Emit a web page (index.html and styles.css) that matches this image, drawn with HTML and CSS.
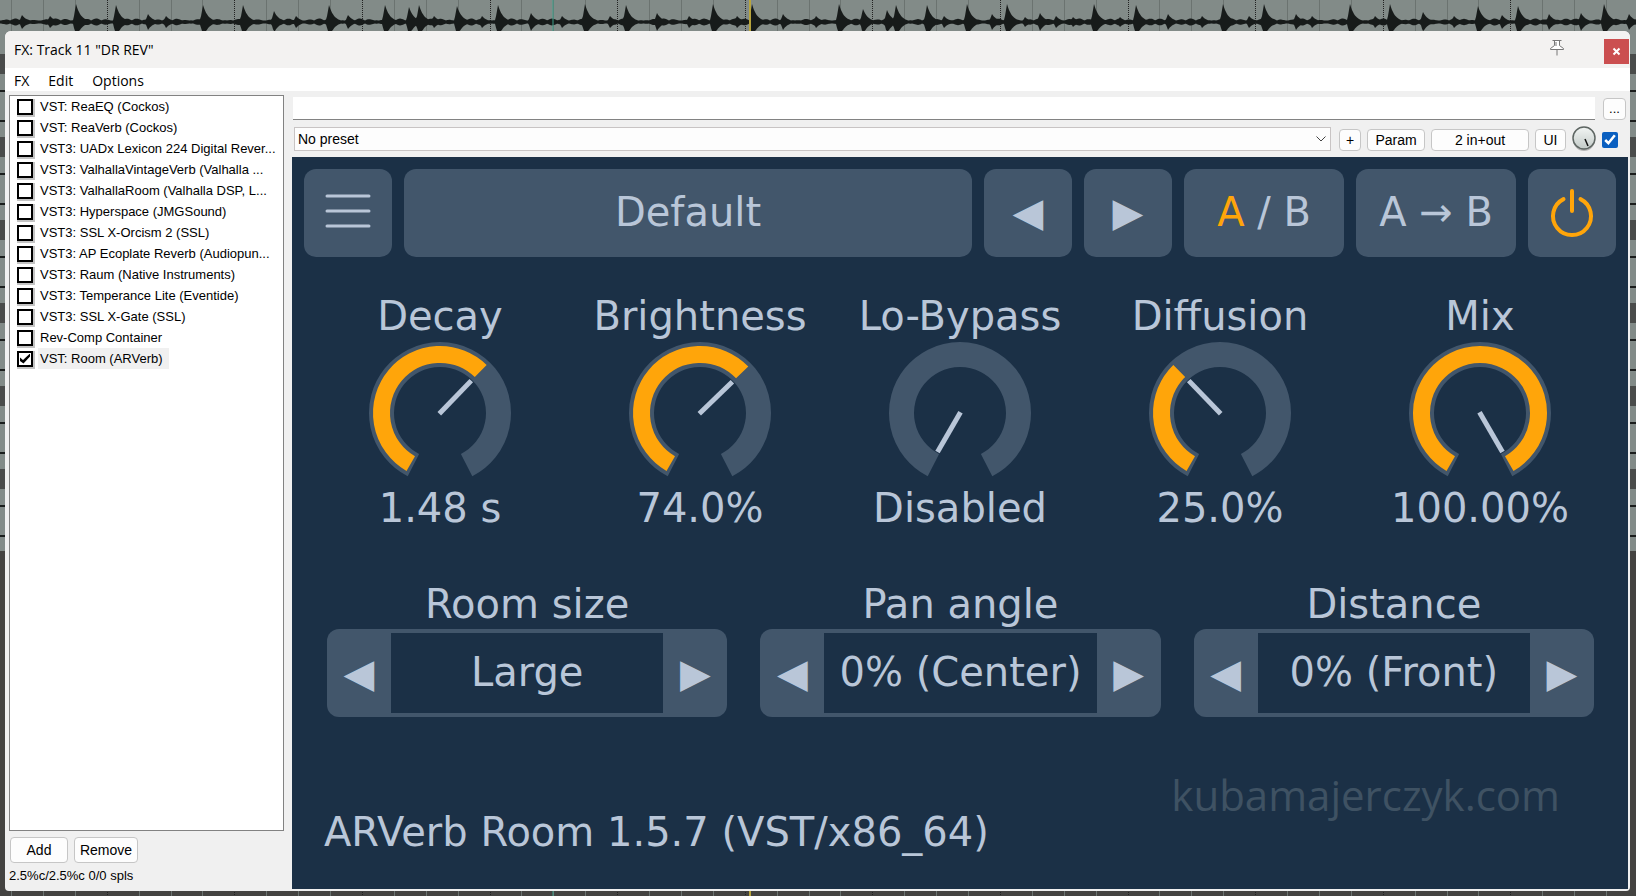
FILE: index.html
```html
<!DOCTYPE html>
<html lang="en">

<head>
    <meta charset="UTF-8">
    <meta name="viewport" content="width=device-width, initial-scale=1.0">
    <title>FX: Track 11 "DR REV"</title>
    <link rel="stylesheet" href="styles.css">
</head>

<body>
    <svg class="arrange" aria-hidden="true">
        <g id="grid"></g>
        <path id="wave" class="wave" />
        <line class="marker" x1="553" x2="553" y1="0" y2="100%" />
        <line class="playhead" x1="750" x2="750" y1="0" y2="100%" />
    </svg>

    <div class="window">
        <header class="titlebar">
            <h1 class="title">FX: Track 11 "DR REV"</h1>
            <button class="pin" aria-label="Pin window">
                <svg width="16" height="18" viewBox="0 0 16 18">
                    <path d="M3.5 1.5h9M5.500 1.500v5l-4 3v1h13v-1l-4-3v-5M8 10.5V16.5M7 3v4" />
                </svg>
            </button>
            <button class="close" aria-label="Close">
                <svg width="9" height="9" viewBox="0 0 9 9">
                    <path d="M1.5 1.5l6 6M7.5 1.5l-6 6" />
                </svg>
            </button>
        </header>

        <nav class="menu">
            <button>FX</button>
            <button>Edit</button>
            <button>Options</button>
        </nav>

        <div class="content">
            <aside class="sidebar">
                <div class="fx-list">
                    <label><input type="checkbox"><span>VST: ReaEQ (Cockos)</span></label>
                    <label><input type="checkbox"><span>VST: ReaVerb (Cockos)</span></label>
                    <label><input type="checkbox"><span>VST3: UADx Lexicon 224 Digital Rever...</span></label>
                    <label><input type="checkbox"><span>VST3: ValhallaVintageVerb (Valhalla ...</span></label>
                    <label><input type="checkbox"><span>VST3: ValhallaRoom (Valhalla DSP, L...</span></label>
                    <label><input type="checkbox"><span>VST3: Hyperspace (JMGSound)</span></label>
                    <label><input type="checkbox"><span>VST3: SSL X-Orcism 2 (SSL)</span></label>
                    <label><input type="checkbox"><span>VST3: AP Ecoplate Reverb (Audiopun...</span></label>
                    <label><input type="checkbox"><span>VST3: Raum (Native Instruments)</span></label>
                    <label><input type="checkbox"><span>VST3: Temperance Lite (Eventide)</span></label>
                    <label><input type="checkbox"><span>VST3: SSL X-Gate (SSL)</span></label>
                    <label><input type="checkbox"><span>Rev-Comp Container</span></label>
                    <label class="selected"><input type="checkbox" checked><span>VST: Room (ARVerb)</span></label>
                </div>
                <div class="list-buttons">
                    <button class="btn add">Add</button>
                    <button class="btn remove">Remove</button>
                </div>
                <div class="status">2.5%c/2.5%c 0/0 spls</div>
            </aside>

            <main class="main">
                <div class="row comment-row">
                    <input class="comment" type="text" aria-label="Comment">
                    <button class="btn dots">...</button>
                </div>
                <div class="row preset-row">
                    <div class="preset">
                        <select aria-label="Preset">
                            <option>No preset</option>
                        </select>
                        <svg class="chevron" width="10" height="6" viewBox="0 0 10 6">
                            <path d="M.5.5l4.5 4.5 4.5-4.5" />
                        </svg>
                    </div>
                    <button class="btn plus">+</button>
                    <button class="btn param">Param</button>
                    <button class="btn io">2 in+out</button>
                    <button class="btn ui">UI</button>
                    <div class="wet">
                        <svg width="24" height="26" viewBox="0 0 24 26">
                            <defs>
                                <linearGradient id="metal" x1="0" y1="0" x2="0" y2="1">
                                    <stop offset="0" stop-color="#f2f5f4" />
                                    <stop offset="1" stop-color="#c3cbc8" />
                                </linearGradient>
                            </defs>
                            <circle cx="12" cy="14" r="11" fill="#b5b5b5" />
                            <circle cx="12" cy="12" r="11" fill="url(#metal)" stroke="#5e6663" stroke-width="1.5" />
                            <path d="M13 13l3 7" stroke="#111" stroke-width="1.5" />
                        </svg>
                        <input type="range" value="100" aria-label="Wet mix">
                    </div>
                    <input class="enabled" type="checkbox" checked aria-label="FX enabled">
                </div>

                <section class="plugin">
                    <div class="toolbar">
                        <button class="key" aria-label="Menu">
                            <svg width="46" height="36" viewBox="0 0 46 36">
                                <path class="burger" d="M2 2h42M2 17h42M2 32h42" />
                            </svg>
                        </button>
                        <button class="key name">Default</button>
                        <button class="key">◀</button>
                        <button class="key">▶</button>
                        <button class="key wide"><span class="active">A</span> / B</button>
                        <button class="key wide">A → B</button>
                        <button class="key" aria-label="Power">
                            <svg width="48" height="52" viewBox="0 0 48 52">
                                <path class="power" d="M15.5 13.1A19 19 0 1 0 32.5 13.1M24 5V25" />
                            </svg>
                        </button>
                    </div>

                    <div class="knobs">
                        <div class="knob">
                            <label for="decay">Decay</label>
                            <div class="dial"><input id="decay" type="range" max="300" value="194"></div>
                            <output for="decay">1.48 s</output>
                        </div>
                        <div class="knob">
                            <label for="brightness">Brightness</label>
                            <div class="dial"><input id="brightness" type="range" max="300" value="196"></div>
                            <output for="brightness">74.0%</output>
                        </div>
                        <div class="knob">
                            <label for="bypass">Lo-Bypass</label>
                            <div class="dial"><input id="bypass" type="range" max="300" value="0"></div>
                            <output for="bypass">Disabled</output>
                        </div>
                        <div class="knob">
                            <label for="diffusion">Diffusion</label>
                            <div class="dial"><input id="diffusion" type="range" max="300" value="106"></div>
                            <output for="diffusion">25.0%</output>
                        </div>
                        <div class="knob">
                            <label for="mix">Mix</label>
                            <div class="dial"><input id="mix" type="range" max="300" value="300"></div>
                            <output for="mix">100.00%</output>
                        </div>
                    </div>

                    <div class="steppers">
                        <div class="stepper">
                            <h2>Room size</h2>
                            <div class="box">
                                <button>◀</button>
                                <span class="value">Large</span>
                                <button>▶</button>
                            </div>
                        </div>
                        <div class="stepper">
                            <h2>Pan angle</h2>
                            <div class="box">
                                <button>◀</button>
                                <span class="value">0% (Center)</span>
                                <button>▶</button>
                            </div>
                        </div>
                        <div class="stepper">
                            <h2>Distance</h2>
                            <div class="box">
                                <button>◀</button>
                                <span class="value">0% (Front)</span>
                                <button>▶</button>
                            </div>
                        </div>
                    </div>

                    <footer class="about">
                        <span>ARVerb Room 1.5.7 (VST/x86_64)</span>
                        <a class="site" href="#">kubamajerczyk.com</a>
                    </footer>
                </section>
            </main>
        </div>
    </div>

    <script src="script.js"></script>
</body>

</html>
```
FILE: styles.css
```css
* {
    box-sizing: border-box;
}

body {
    margin: 0;
    min-height: 100vh;
    display: flex;
    padding: 31px 6px 5px 5px;
    font: 13px "Liberation Sans", Arial, sans-serif;
    color: #000;
    background: #444341;
}

button,
input,
select {
    font: inherit;
    color: inherit;
    margin: 0;
}

button {
    padding: 0;
    border: none;
    background: none;
}

/* tracks behind the window */
.arrange {
    position: absolute;
    top: 0;
    left: 0;
    width: 100%;
    height: 100%;
    z-index: -1;
    background:
        linear-gradient(#444341, #444341) 0 551px no-repeat,
        repeating-linear-gradient(#4a4c4b 0 20px, #828b88 20px 36px, #1a1d1c 36px 38px, #828b88 38px 66px, #1a1d1c 66px 68px, #828b88 68px 83px) 0 54px no-repeat,
        #828b88;
}

.grid-line {
    stroke: #6b7370;
}

.grid-bar {
    stroke: #222;
    stroke-dasharray: 1 1;
}

.wave {
    fill: #171b1a;
}

.marker {
    stroke: #3fa08a;
}

.playhead {
    stroke: #b9a53c;
    stroke-width: 2;
}

.window {
    flex: 1;
    display: flex;
    flex-direction: column;
    background: #f0f0f0;
    border-radius: 6px 6px 4px 4px;
    overflow: hidden;
}

.titlebar {
    display: flex;
    align-items: center;
    height: 37px;
    padding: 0 1px 0 9px;
    background: #f3f2f1;
}

.title {
    flex: 1;
    margin: 0;
    font: 14px "Open Sans", sans-serif;
}

.pin {
    width: 16px;
    height: 18px;
    margin: 0 39px 4px 0;
}

.pin svg {
    display: block;
    fill: #fff;
    stroke: #777;
}

.close {
    width: 25px;
    height: 25px;
    margin-top: 3px;
    background: #cb4f50;
}

.close svg {
    stroke: #fff;
    stroke-width: 2;
}

.menu {
    display: flex;
    gap: 19px;
    height: 23px;
    padding: 2px 0 0 9px;
    background: #fff;
    font: 14px "Open Sans", sans-serif;
}

.content {
    flex: 1;
    display: flex;
}

.sidebar {
    width: 287px;
    display: flex;
    flex-direction: column;
    padding: 4px 8px 7px 4px;
}

.fx-list {
    flex: 1;
    padding: 0 0 0 7px;
    border: 1px solid #828282;
    background: #fff;
    white-space: nowrap;
    overflow: hidden;
}

.fx-list label {
    display: flex;
    align-items: center;
    height: 21px;
    gap: 5px;
}

.fx-list input {
    appearance: none;
    flex: none;
    display: grid;
    place-items: center;
    width: 16px;
    height: 16px;
    border: 2px solid #000;
    box-shadow: 1px 1px 0 1px #c4c4c4;
    background: #fff;
}

.fx-list input:checked::before {
    content: "";
    width: 10px;
    height: 10px;
    background: #000;
    clip-path: polygon(0 40%, 30% 65%, 100% 0, 100% 30%, 35% 100%, 0 75%);
}

.fx-list span {
    padding: 3px 6px 3px 2px;
    line-height: 15px;
}

.fx-list .selected span {
    background: #f0f0f0;
}

.btn {
    border: 1px solid #c6c6c6;
    border-radius: 4px;
    background: #fdfdfd;
    font-size: 14px;
}

.list-buttons {
    display: flex;
    gap: 6px;
    height: 26px;
    margin: 6px 0 5px 1px;
}

.add {
    width: 58px;
}

.remove {
    width: 64px;
}

.status {
    line-height: 16px;
}

.main {
    flex: 1;
    min-width: 0;
    display: flex;
    flex-direction: column;
    padding: 6px 2px 2px 0;
}

.row {
    display: flex;
    align-items: center;
}

.comment-row {
    gap: 8px;
    height: 23px;
    margin-bottom: 6px;
    padding: 0 2px 0 1px;
}

.comment {
    flex: 1;
    height: 23px;
    border: none;
    border-bottom: 1px solid #828282;
    background: #fff;
}

.dots {
    width: 23px;
    height: 22px;
    font-size: 13px;
}

.preset-row {
    gap: 6px;
    height: 25px;
    margin-bottom: 6px;
    padding: 0 10px 0 2px;
}

.preset-row .btn {
    height: 22px;
    margin-top: 2px;
}

.preset {
    flex: 1;
    position: relative;
    margin-right: 2px;
}

.preset select {
    appearance: none;
    display: block;
    width: 100%;
    height: 24px;
    padding: 0 3px;
    border: 1px solid #c8c4c4;
    border-radius: 0;
    background: #fdfdfd;
    font-size: 14px;
}

.chevron {
    position: absolute;
    right: 5px;
    top: 9px;
    fill: none;
    stroke: #444;
    pointer-events: none;
}

.plus {
    width: 22px;
}

.param {
    width: 58px;
}

.io {
    width: 98px;
}

.ui {
    width: 31px;
}

.wet,
.dial {
    position: relative;
}

.wet svg,
.dial svg {
    display: block;
}

/* real sliders lie invisible over the drawn dials */
.wet input,
.dial input {
    position: absolute;
    top: 0;
    left: 0;
    width: 100%;
    height: 100%;
    opacity: 0;
}

.enabled {
    width: 16px;
    height: 16px;
    margin-top: 2px;
    accent-color: #0a5fc0;
}

.plugin {
    flex: 1;
    display: flex;
    flex-direction: column;
    padding: 12px 12px 33px;
    background: #1b3046;
    color: #b9c6d8;
    font: 40px/48px "DejaVu Sans", sans-serif;
}

.toolbar {
    display: flex;
    gap: 12px;
}

.key {
    display: flex;
    align-items: center;
    justify-content: center;
    width: 88px;
    height: 88px;
    padding-bottom: 2px;
    border-radius: 12px;
    background: #42566b;
    white-space: pre;
}

.name {
    flex: 1;
}

.wide {
    width: 160px;
}

.active {
    color: #ffa50a;
}

.burger {
    stroke: #b9c6d8;
    stroke-width: 3;
    stroke-linecap: round;
}

.power {
    fill: none;
    stroke: #ffa50a;
    stroke-width: 4;
    stroke-linecap: round;
}

.knobs {
    display: grid;
    grid-template-columns: repeat(5, 1fr);
    margin: 35px 6px 48px;
}

.knob {
    display: flex;
    flex-direction: column;
    align-items: center;
}

.track,
.level {
    fill: none;
    stroke: #42566b;
    stroke-width: 25;
}

.level {
    stroke: #ffa50a;
    stroke-width: 17;
}

.needle {
    stroke: #b9c6d8;
    stroke-width: 5;
}

.steppers {
    display: grid;
    grid-template-columns: repeat(3, 1fr);
    margin: 0 6px;
    text-align: center;
}

.stepper {
    padding: 0 16px 0 17px;
}

.stepper h2 {
    margin: 0 0 1px;
    font: inherit;
}

.box {
    display: flex;
    height: 88px;
    padding: 4px 0;
    border-radius: 12px;
    background: #42566b;
}

.box button {
    width: 64px;
}

.value {
    flex: 1;
    background: #1b3046;
    line-height: 78px;
}

.about {
    display: flex;
    justify-content: space-between;
    align-items: flex-end;
    margin: auto 56px 0 20px;
}

.site {
    margin-bottom: 37px;
    color: #3f5263;
    font-family: "Open Sans", sans-serif;
    font-size: 42px;
    text-decoration: none;
}
```
FILE: script.js
```js
let grid = document.querySelector('#grid');
let wave = document.querySelector('#wave');

// x, height above the axis
let hits = [
    [22, 7], [50, 6], [76, 18], [116, 17], [148, 8], [166, 6], [203, 17], [243, 17], [274, 11], [296, 6], [329, 17],
    [348, 7], [385, 17], [409, 15], [419, 17], [434, 6], [457, 16], [482, 6], [498, 17], [531, 9], [562, 6],
    [585, 18], [610, 6], [626, 17], [657, 9], [689, 6], [713, 18], [737, 6], [752, 18], [783, 8], [816, 6],
    [839, 18], [863, 13], [887, 12], [896, 17], [927, 17], [944, 6], [967, 18], [992, 8], [1007, 18], [1025, 5],
    [1040, 9], [1056, 6], [1073, 5], [1094, 18], [1120, 5], [1136, 17], [1168, 8], [1202, 6], [1223, 18], [1249, 6],
    [1264, 18], [1296, 8], [1312, 6], [1350, 18], [1375, 6], [1390, 18], [1423, 10], [1454, 6], [1478, 16],
    [1502, 7], [1518, 16], [1549, 8], [1581, 9], [1604, 18], [1629, 8]
];

function level(x) {
    let h = 1.5 + Math.abs(Math.sin(x * 0.31) * Math.sin(x * 0.083)) * 2;

    for (let [pos, size] of hits) {
        let d = x - pos;
        if (d >= -2 && d < 16) {
            h = Math.max(h, d < 0 ? size * (1 + d / 3) : size * Math.exp(-d / 5));
        }
    }

    return h;
}

function drawWave() {
    let top = '';
    let bottom = '';
    let width = window.innerWidth;

    for (let x = 0; x <= width; x++) {
        let h = level(x);
        top += `L${x} ${22 - h}`;
        bottom = `L${x} ${22 + Math.min(h, 9)}` + bottom;
    }

    wave.setAttribute('d', 'M0 22' + top + bottom + 'Z');
}

function drawGrid() {
    let lines = '';

    for (let i = 0; i * 32 < window.innerWidth; i++) {
        let x = Math.round(11 + i * 31.9) + 0.5;
        let name = i % 4 == 3 ? 'grid-bar' : 'grid-line';
        lines += `<line class="${name}" x1="${x}" x2="${x}" y1="0" y2="100%" />`;
    }

    grid.innerHTML = lines;
}

function drawDial(input) {
    let value = Number(input.value);
    let level = value > 0 ? `<path class="level" pathLength="300" stroke-dasharray="${value} 400" d="M42.75 123.66A58.5 58.5 0 1 1 101.25 123.66" />` : '';

    input.insertAdjacentHTML('beforebegin', `<svg width="144" height="144" viewBox="0 0 144 144">
        <path class="track" d="M45.4 125.1A58.5 58.5 0 1 1 98.6 125.1" />
        ${level}
        <line class="needle" x1="72" y1="74" x2="72" y2="28" transform="rotate(${value - 150} 72 73)" />
    </svg>`);
}

drawGrid();
drawWave();

for (let input of document.querySelectorAll('.dial input')) {
    drawDial(input);
    input.addEventListener('input', function () {
        this.previousElementSibling.remove();
        drawDial(this);
    });
}
```
